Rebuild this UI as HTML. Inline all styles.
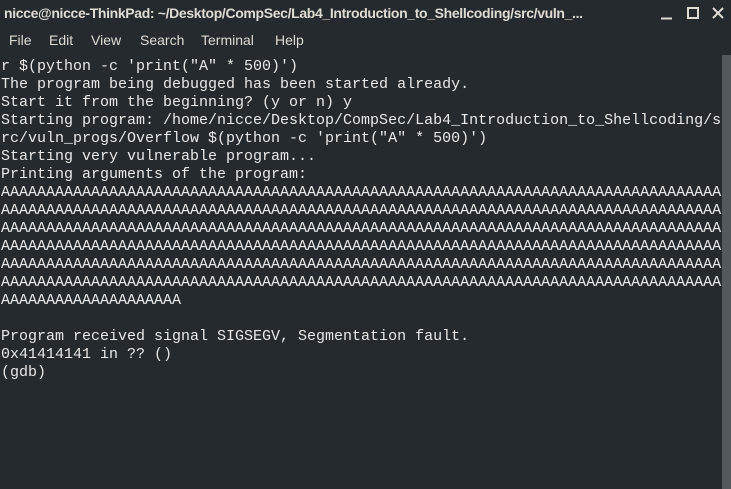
<!DOCTYPE html>
<html><head><meta charset="utf-8"><style>
html,body{margin:0;padding:0;}
body{width:731px;height:489px;background:#242a2e;overflow:hidden;position:relative;font-family:"Liberation Sans",sans-serif;}
#title{position:absolute;left:0;top:0;width:731px;height:27px;background:#242a2e;color:#dfdbd2;font-size:14px;font-weight:bold;line-height:27px;}
#title .t{position:absolute;left:4px;top:0;letter-spacing:-0.35px;}
#menu{position:absolute;left:0;top:27px;width:731px;height:27px;color:#dfdbd2;font-size:14px;line-height:27px;}
#menu span{position:absolute;top:0;}
#term{position:absolute;left:1px;top:58px;font-family:"Liberation Mono",monospace;font-size:15px;line-height:18px;color:#e8e8e8;white-space:pre;}
#sb{position:absolute;left:722px;top:55px;width:9px;height:434px;background:#53595c;}
</style></head><body>
<div id="title"><span class="t">nicce@nicce-ThinkPad: ~/Desktop/CompSec/Lab4_Introduction_to_Shellcoding/src/vuln_...</span>
<svg style="position:absolute;left:0;top:0" width="731" height="27">
<line x1="661" y1="18.5" x2="672" y2="18.5" stroke="#dfdbd2" stroke-width="2"/>
<rect x="688" y="8" width="10" height="10" fill="none" stroke="#dfdbd2" stroke-width="2"/>
<path d="M713 8 L723 18 M723 8 L713 18" stroke="#dfdbd2" stroke-width="2"/>
</svg></div>
<div id="menu"><span style="left:9px">File</span><span style="left:49px">Edit</span><span style="left:91px">View</span><span style="left:140px">Search</span><span style="left:201px">Terminal</span><span style="left:275px">Help</span></div>
<div id="term">r $(python -c 'print("A" * 500)')
The program being debugged has been started already.
Start it from the beginning? (y or n) y
Starting program: /home/nicce/Desktop/CompSec/Lab4_Introduction_to_Shellcoding/s
rc/vuln_progs/Overflow $(python -c 'print("A" * 500)')
Starting very vulnerable program...
Printing arguments of the program:
AAAAAAAAAAAAAAAAAAAAAAAAAAAAAAAAAAAAAAAAAAAAAAAAAAAAAAAAAAAAAAAAAAAAAAAAAAAAAAAA
AAAAAAAAAAAAAAAAAAAAAAAAAAAAAAAAAAAAAAAAAAAAAAAAAAAAAAAAAAAAAAAAAAAAAAAAAAAAAAAA
AAAAAAAAAAAAAAAAAAAAAAAAAAAAAAAAAAAAAAAAAAAAAAAAAAAAAAAAAAAAAAAAAAAAAAAAAAAAAAAA
AAAAAAAAAAAAAAAAAAAAAAAAAAAAAAAAAAAAAAAAAAAAAAAAAAAAAAAAAAAAAAAAAAAAAAAAAAAAAAAA
AAAAAAAAAAAAAAAAAAAAAAAAAAAAAAAAAAAAAAAAAAAAAAAAAAAAAAAAAAAAAAAAAAAAAAAAAAAAAAAA
AAAAAAAAAAAAAAAAAAAAAAAAAAAAAAAAAAAAAAAAAAAAAAAAAAAAAAAAAAAAAAAAAAAAAAAAAAAAAAAA
AAAAAAAAAAAAAAAAAAAA

Program received signal SIGSEGV, Segmentation fault.
0x41414141 in ?? ()
(gdb) </div>
<div id="sb"></div>
</body></html>
